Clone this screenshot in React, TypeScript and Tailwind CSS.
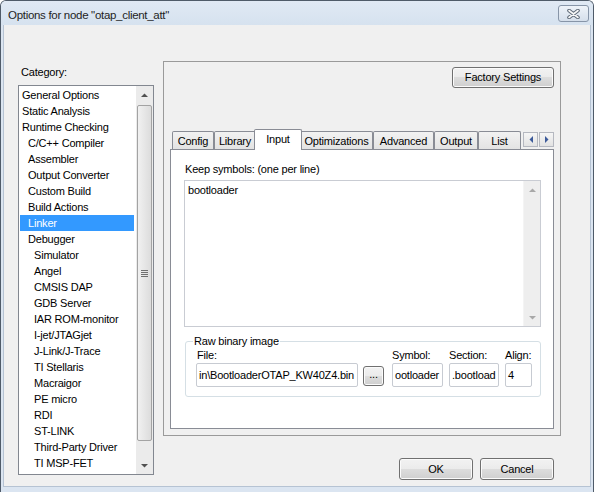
import React from "react";

const categories: [string, number][] = [
  ["General Options", 0],
  ["Static Analysis", 0],
  ["Runtime Checking", 0],
  ["C/C++ Compiler", 1],
  ["Assembler", 1],
  ["Output Converter", 1],
  ["Custom Build", 1],
  ["Build Actions", 1],
  ["Linker", 1],
  ["Debugger", 1],
  ["Simulator", 2],
  ["Angel", 2],
  ["CMSIS DAP", 2],
  ["GDB Server", 2],
  ["IAR ROM-monitor", 2],
  ["I-jet/JTAGjet", 2],
  ["J-Link/J-Trace", 2],
  ["TI Stellaris", 2],
  ["Macraigor", 2],
  ["PE micro", 2],
  ["RDI", 2],
  ["ST-LINK", 2],
  ["Third-Party Driver", 2],
  ["TI MSP-FET", 2],
];

const indent = ["pl-[2px]", "pl-[8px]", "pl-[14px]"];

function Tri({ dir, color }: { dir: "up" | "down" | "left" | "right"; color: string }) {
  const pts = {
    up: "0,4 3.5,0.5 7,4",
    down: "0,0 3.5,3.5 7,0",
    left: "4,0 0.5,3.5 4,7",
    right: "0,0 3.5,3.5 0,7",
  }[dir];
  const vertical = dir === "up" || dir === "down";
  return (
    <svg width={vertical ? 7 : 4} height={vertical ? 4 : 7} viewBox={vertical ? "0 0 7 4" : "0 0 4 7"}>
      <polygon points={pts} fill={color} />
    </svg>
  );
}

function Button({ children, className }: { children: React.ReactNode; className: string }) {
  return (
    <div
      className={
        "flex items-center justify-center rounded-[3px] border border-[#707070] bg-[linear-gradient(to_bottom,#f2f2f2_0%,#ebebeb_50%,#dddddd_50%,#cfcfcf_100%)] shadow-[inset_0_0_0_1px_#fbfbfb] " +
        className
      }
    >
      {children}
    </div>
  );
}

function Tab({ label, w, active }: { label: string; w: string; active?: boolean }) {
  if (active) {
    return (
      <div
        className={`relative z-10 -mx-[2px] -mb-px flex h-[21px] items-start justify-center rounded-t-[2px] border border-b-0 border-[#898c95] bg-white pt-[2px] leading-[14px] ${w}`}
      >
        {label}
      </div>
    );
  }
  return (
    <div
      className={`flex h-[18px] items-center justify-center rounded-t-[2px] border border-b-0 border-[#898c95] bg-[linear-gradient(to_bottom,#f2f2f2,#e3e3e3)] leading-[14px] ${w}`}
    >
      {label}
    </div>
  );
}

function Field({ text, className }: { text: string; className: string }) {
  return (
    <div
      className={
        "mt-px flex h-[24px] items-center overflow-hidden whitespace-nowrap rounded-[2px] border border-[#c7cbd2] bg-white " +
        className
      }
    >
      {text}
    </div>
  );
}

export default function App() {
  return (
    <div className="flex h-[492px] w-[594px] flex-col overflow-hidden rounded-t-[6px] border border-b-0 border-[#4f5b69] bg-[#dbe5f1] font-['Liberation_Sans',Arial,sans-serif] text-[11px] tracking-[-0.2px] text-black">
      {/* title bar */}
      <div className="flex h-[24px] items-start justify-between bg-[linear-gradient(to_bottom,#e0e9f4,#d6e2ef)] pl-[7px] pr-[4px]">
        <span className="mt-[6px] text-[11.5px] leading-[16px] tracking-[-0.3px] text-[#1e1e1e]">
          Options for node "otap_client_att"
        </span>
        <div className="mt-[4px] flex h-[17px] w-[31px] items-center justify-center rounded-[3px] border border-[#8795a8] bg-[linear-gradient(to_bottom,#eef3f9,#d5dfeb)]">
          <svg width="13" height="10" viewBox="0 0 13 10">
            <path d="M2 1.5 L11 8.5 M11 1.5 L2 8.5" stroke="#5f6a78" strokeWidth="3.6" strokeLinecap="round" />
            <path d="M2 1.5 L11 8.5 M11 1.5 L2 8.5" stroke="#f7f7f7" strokeWidth="1.6" strokeLinecap="round" />
          </svg>
        </div>
      </div>

      {/* body */}
      <div className="mx-[2px] mb-[5px] flex flex-1 border-x border-b border-[#b6c3d3] bg-[#f0f0f0]">
        {/* left column */}
        <div className="ml-[14px] w-[136px] pt-[36px]">
          <div className="mt-[4px] h-[14px] pl-[3px] leading-[14px]">Category:</div>
          <div className="mt-[6px] flex h-[390px] border border-[#828790] bg-white">
            <div className="flex-1 pl-px pt-px">
              {categories.map(([name, lvl]) => (
                <div
                  key={name}
                  className={`h-[16px] w-[114px] leading-[16px] ${indent[lvl]} ${
                    name === "Linker" ? "bg-[#3399ff] text-white" : ""
                  }`}
                >
                  {name}
                </div>
              ))}
            </div>
            <div className="flex w-[17px] flex-col bg-[#ebebeb]">
              <div className="flex h-[17px] items-center justify-center">
                <Tri dir="up" color="#505050" />
              </div>
              <div className="flex-1 px-px">
                <div className="mt-[2px] flex h-[336px] items-center justify-center rounded-[2px] border border-[#a3a3a3] bg-[linear-gradient(to_right,#f1f1f1,#dcdcdc)]">
                  <div className="flex flex-col gap-px">
                    <div className="h-px w-[7px] bg-[#707070]" />
                    <div className="h-px w-[7px] bg-[#707070]" />
                    <div className="h-px w-[7px] bg-[#707070]" />
                    <div className="h-px w-[7px] bg-[#707070]" />
                  </div>
                </div>
              </div>
              <div className="flex h-[17px] items-center justify-center">
                <Tri dir="down" color="#505050" />
              </div>
            </div>
          </div>
        </div>

        {/* right column */}
        <div className="ml-[9px] w-[398px] pt-[36px]">
          <div className="flex h-[375px] flex-col border border-[#9a9a9a]">
            <div className="flex justify-end pr-[6px] pt-[5px]">
              <Button className="h-[21px] w-[102px]">Factory Settings</Button>
            </div>

            <div className="mt-[41px] flex h-[20px] items-end px-[6px]">
              <div className="ml-[2px] flex items-end">
                <Tab label="Config" w="w-[42px]" />
                <Tab label="Library" w="w-[42px]" />
                <Tab label="Input" w="w-[48px]" active />
                <Tab label="Optimizations" w="w-[73px]" />
                <Tab label="Advanced" w="w-[61px]" />
                <Tab label="Output" w="w-[44px]" />
                <Tab label="List" w="w-[43px]" />
              </div>
              <div className="mb-[2px] ml-auto flex gap-px">
                <div className="flex h-[15px] w-[15px] items-center justify-center border border-[#b5b8c0] bg-[linear-gradient(to_bottom,#f6f6f6,#e2e2e2)]">
                  <Tri dir="left" color="#3c5a9a" />
                </div>
                <div className="flex h-[15px] w-[15px] items-center justify-center border border-[#b5b8c0] bg-[linear-gradient(to_bottom,#f6f6f6,#e2e2e2)]">
                  <Tri dir="right" color="#3c5a9a" />
                </div>
              </div>
            </div>

            <div className="mx-[6px] mb-[6px] flex flex-1 flex-col border border-[#898c95] bg-white">
              <div className="ml-[14px] mt-[12px] h-[14px] leading-[14px]">Keep symbols: (one per line)</div>
              <div className="ml-[13px] mt-[4px] flex h-[147px] w-[357px] border border-[#c9ccd3]">
                <div className="flex-1 pl-[3px] pt-[2px] leading-[14px]">bootloader</div>
                <div className="flex w-[17px] flex-col justify-between border-l border-[#f4f4f4] bg-[#eeeeee]">
                  <div className="flex h-[17px] items-center justify-center">
                    <Tri dir="up" color="#a8a8a8" />
                  </div>
                  <div className="flex h-[17px] items-center justify-center">
                    <Tri dir="down" color="#a8a8a8" />
                  </div>
                </div>
              </div>

              <div className="relative ml-[14px] mt-[14px] h-[56px] w-[356px] rounded-[3px] border border-[#d5dfe5]">
                <div className="absolute -top-[8px] left-[7px] bg-white px-px leading-[14px]">Raw binary image</div>
                <div className="flex items-end pl-[10px] pt-[6px]">
                  <div className="flex flex-col">
                    <div className="h-[14px] pl-px leading-[14px]">File:</div>
                    <Field text={"in\\BootloaderOTAP_KW40Z4.bin"} className="w-[162px] justify-end pr-[3px]" />
                  </div>
                  <Button className="mb-px ml-[5px] h-[20px] w-[21px] pb-[3px]">...</Button>
                  <div className="ml-[8px] flex flex-col">
                    <div className="h-[14px] leading-[14px]">Symbol:</div>
                    <Field text="ootloader" className="w-[51px] pl-[2px]" />
                  </div>
                  <div className="ml-[6px] flex flex-col">
                    <div className="h-[14px] leading-[14px]">Section:</div>
                    <Field text=".bootload" className="w-[50px] pl-[2px]" />
                  </div>
                  <div className="ml-[6px] flex flex-col">
                    <div className="h-[14px] leading-[14px]">Align:</div>
                    <Field text="4" className="w-[27px] pl-[2px]" />
                  </div>
                </div>
              </div>
            </div>
          </div>

          <div className="mt-[22px] flex justify-end gap-[7px] pr-[7px]">
            <Button className="h-[22px] w-[74px]">OK</Button>
            <Button className="h-[22px] w-[74px]">Cancel</Button>
          </div>
        </div>
      </div>
    </div>
  );
}
